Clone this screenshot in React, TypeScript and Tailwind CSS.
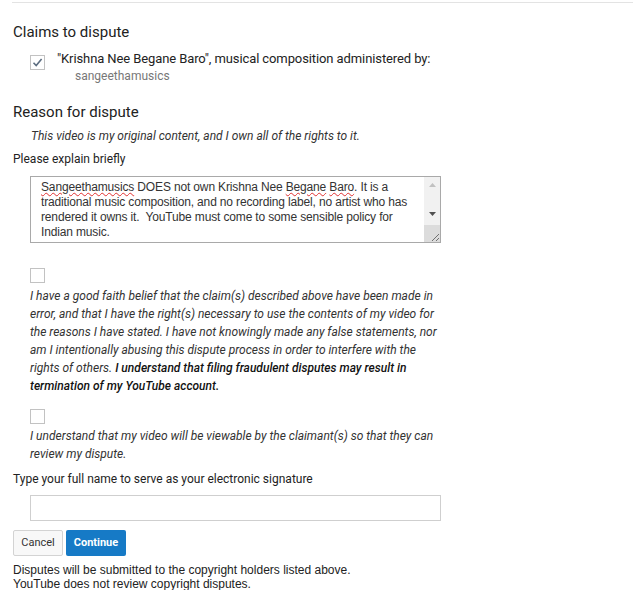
import React from 'react';

function Box({ checked = false }: { checked?: boolean }) {
  return (
    <div className="w-[15px] h-[15px] border border-[#c2c2c2] bg-white flex items-center justify-center">
      {checked && (
        <svg width="11" height="11" viewBox="0 0 11 11">
          <path d="M1.5 5.8 L4.2 8.5 L9.6 2" fill="none" stroke="#5c6d80" strokeWidth="1.6" />
        </svg>
      )}
    </div>
  );
}

export default function App() {
  const roboto = { fontFamily: 'Roboto, "Liberation Sans", sans-serif' };
  const arial = { fontFamily: '"Liberation Sans", Arial, sans-serif' };
  const squiggle = 'underline decoration-wavy decoration-[#e03030] decoration-1 underline-offset-[1px]';

  return (
    <div className="w-[633px] h-[590px] bg-white text-[#333] overflow-hidden" style={roboto}>
      {/* top rule */}
      <div className="ml-[12px] mt-[2px] h-px bg-[#e3e3e3]" />

      <div className="pl-[13px]">
        <h2 className="mt-[19px] text-[15px] leading-[20px] text-[#222]">Claims to dispute</h2>

        <div className="mt-[9px] flex items-start gap-[12px] pl-[17px]">
          <div className="mt-[4px]">
            <Box checked />
          </div>
          <div>
            <div className="text-[13px] leading-[16px] tracking-[-0.1px] text-[#222]">
              "Krishna Nee Begane Baro", musical composition administered by:
            </div>
            <div className="mt-px pl-[18px] text-[12px] leading-[16px] text-[#777]">sangeethamusics</div>
          </div>
        </div>

        <h2 className="mt-[18px] text-[15px] leading-[20px] text-[#222]">Reason for dispute</h2>
        <p className="mt-[6px] pl-[18px] text-[12px] leading-[16px] italic text-[#333]">
          This video is my original content, and I own all of the rights to it.
        </p>
        <div className="mt-[7px] text-[12px] leading-[16px] text-[#222]">Please explain briefly</div>

        {/* textarea */}
        <div className="mt-[9px] ml-[17px] w-[411px] h-[67px] border border-[#a9a9a9] flex">
          <div className="flex-1 pl-[10px] pr-[8px] pt-[3px] text-[12px] leading-[15px] tracking-[-0.15px] text-[#333]" style={arial}>
            <span className={squiggle}>Sangeethamusics</span> DOES not own Krishna Nee{' '}
            <span className={squiggle}>Begane</span> <span className={squiggle}>Baro</span>. It is a traditional music
            composition, and no recording label, no artist who has rendered it owns it.&nbsp; YouTube must come to some
            sensible policy for Indian music.
          </div>
          <div className="w-[16px] bg-[#f1f1f1] flex flex-col items-center">
            <svg className="mt-[6px]" width="7" height="4" viewBox="0 0 7 4">
              <path d="M0 4 L3.5 0 L7 4 Z" fill="#c1c1c1" />
            </svg>
            <svg className="mt-[25px]" width="7" height="4" viewBox="0 0 7 4">
              <path d="M0 0 L3.5 4 L7 0 Z" fill="#505050" />
            </svg>
            <div className="mt-auto w-[16px] h-[17px] bg-[#dcdcdc] flex items-end justify-end">
              <svg width="10" height="10" viewBox="0 0 10 10">
                <path d="M9 2 L2 9 M9 6 L6 9" stroke="#707070" strokeWidth="1" />
              </svg>
            </div>
          </div>
        </div>

        <div className="mt-[25px] pl-[17px]">
          <Box />
        </div>
        <p className="mt-[4px] pl-[17px] w-[430px] text-[12px] leading-[18px] italic text-[#333]">
          I have a good faith belief that the claim(s) described above have been made in error, and that I have the
          right(s) necessary to use the contents of my video for the reasons I have stated. I have not knowingly made
          any false statements, nor am I intentionally abusing this dispute process in order to interfere with the
          rights of others. <span className="font-medium text-[#111]">I understand that filing fraudulent disputes may result in termination of my YouTube account.</span>
        </p>

        <div className="mt-[14px] pl-[17px]">
          <Box />
        </div>
        <p className="mt-[3px] pl-[17px] w-[430px] text-[12px] leading-[18px] italic text-[#333]">
          I understand that my video will be viewable by the claimant(s) so that they can review my dispute.
        </p>

        <div className="mt-[8px] text-[12px] leading-[16px] text-[#222]">
          Type your full name to serve as your electronic signature
        </div>
        <div className="mt-[8px] ml-[17px] w-[411px] h-[26px] border border-[#cfcfcf] bg-white" />

        <div className="mt-[9px] flex gap-[3px]">
          <button className="w-[50px] h-[26px] bg-[#f8f8f8] border border-[#d3d3d3] rounded-[2px] text-[11px] text-[#333]">
            Cancel
          </button>
          <button className="w-[60px] h-[26px] bg-[#167ac6] rounded-[2px] text-[11px] font-bold text-white">
            Continue
          </button>
        </div>

        <div className="mt-[7px] text-[12px] leading-[14px] text-[#222]" style={arial}>
          Disputes will be submitted to the copyright holders listed above.
          <br />
          YouTube does not review copyright disputes.
        </div>
      </div>
    </div>
  );
}
